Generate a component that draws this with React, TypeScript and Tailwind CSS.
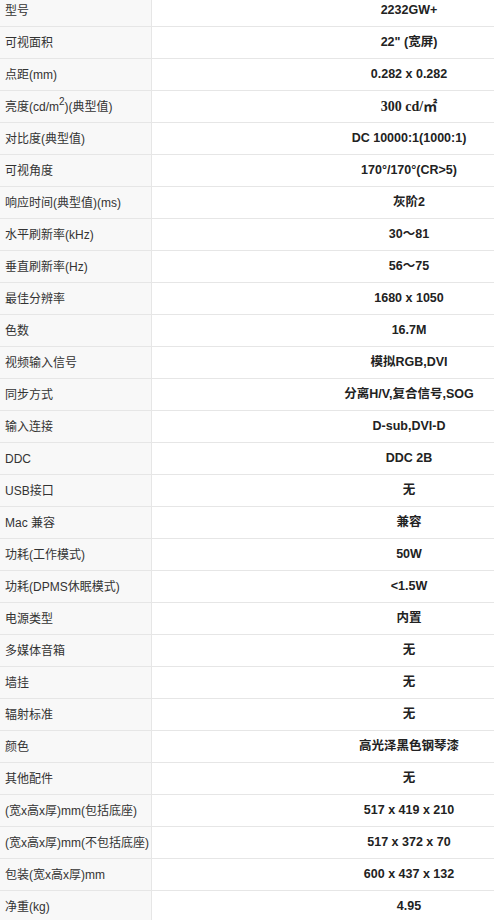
import React from 'react';

type Spec = { label: React.ReactNode; value: React.ReactNode };

const specs: Spec[] = [
  { label: '型号', value: '2232GW+' },
  { label: '可视面积', value: '22" (宽屏)' },
  { label: '点距(mm)', value: '0.282 x 0.282' },
  {
    label: (
      <>
        亮度(cd/m<sup className="text-[10px] relative -top-[5px]">2</sup>)(典型值)
      </>
    ),
    value: <span className="font-['Liberation_Serif','Noto_Sans_CJK_SC',serif] text-[14px]">300 cd/㎡</span>,
  },
  { label: '对比度(典型值)', value: 'DC 10000:1(1000:1)' },
  { label: '可视角度', value: '170°/170°(CR>5)' },
  { label: '响应时间(典型值)(ms)', value: '灰阶2' },
  { label: '水平刷新率(kHz)', value: '30～81' },
  { label: '垂直刷新率(Hz)', value: '56～75' },
  { label: '最佳分辨率', value: '1680 x 1050' },
  { label: '色数', value: '16.7M' },
  { label: '视频输入信号', value: '模拟RGB,DVI' },
  { label: '同步方式', value: '分离H/V,复合信号,SOG' },
  { label: '输入连接', value: 'D-sub,DVI-D' },
  { label: 'DDC', value: 'DDC 2B' },
  { label: 'USB接口', value: '无' },
  { label: 'Mac 兼容', value: '兼容' },
  { label: '功耗(工作模式)', value: '50W' },
  { label: '功耗(DPMS休眠模式)', value: '<1.5W' },
  { label: '电源类型', value: '内置' },
  { label: '多媒体音箱', value: '无' },
  { label: '墙挂', value: '无' },
  { label: '辐射标准', value: '无' },
  { label: '颜色', value: '高光泽黑色钢琴漆' },
  { label: '其他配件', value: '无' },
  { label: '(宽x高x厚)mm(包括底座)', value: '517 x 419 x 210' },
  { label: '(宽x高x厚)mm(不包括底座)', value: '517 x 372 x 70' },
  { label: '包装(宽x高x厚)mm', value: '600 x 437 x 132' },
  { label: '净重(kg)', value: '4.95' },
];

const App: React.FC = () => {
  return (
    <div className="w-[494px] h-[920px] overflow-hidden bg-white font-['Liberation_Sans','Noto_Sans_CJK_SC',sans-serif]">
      <div className="w-[666px] -mt-[5px]">
        {specs.map((row, i) => (
          <div key={i} className="flex h-[32px] border-b border-[#e6e6e6]">
            <div className="w-[152px] shrink-0 bg-[#f8f8f8] border-r border-[#e6e6e6] pl-[5px] flex items-center text-[12px] text-[#333] whitespace-nowrap">
              {row.label}
            </div>
            <div className="flex-1 flex items-center justify-center text-[12.5px] font-bold text-[#222] whitespace-nowrap">
              {row.value}
            </div>
          </div>
        ))}
      </div>
    </div>
  );
};

export default App;
